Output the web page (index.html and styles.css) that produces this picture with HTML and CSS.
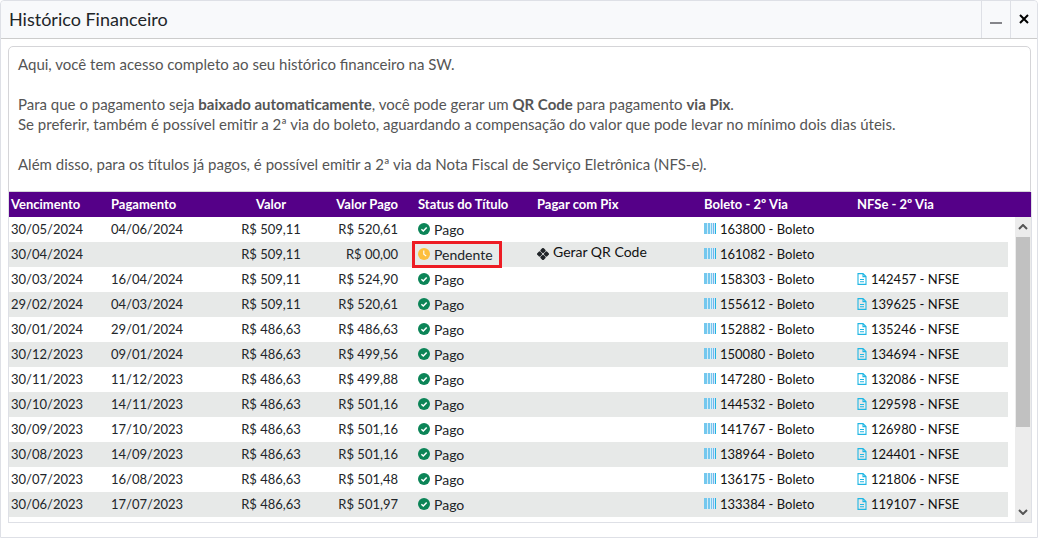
FILE: index.html
```
<!DOCTYPE html>
<html lang="pt-BR">
<head>
  <meta charset="UTF-8" />
  <meta name="viewport" content="width=device-width, initial-scale=1.0" />
  <title>Histórico Financeiro</title>
  <link rel="stylesheet" href="styles.css">
</head>
<body>
  <!-- icons -->
  <svg class="sprite" aria-hidden="true">
    <symbol id="check" viewBox="0 0 12 12">
      <circle cx="6" cy="6" r="6" fill="#0b8457"/>
      <path d="M3.4 6.2l1.9 1.8 3.4-3.6" fill="none" stroke="#fff" stroke-width="1.5"/>
    </symbol>
    <symbol id="clock" viewBox="0 0 12 12">
      <circle cx="6" cy="6" r="6" fill="#fdbf3c"/>
      <path d="M5.8 2.5v3.8l2.4 1.7" fill="none" stroke="#fff" stroke-width="1.1"/>
    </symbol>
    <symbol id="pix" viewBox="0 0 12 12">
      <g fill="#212529">
        <rect x="3.8" y="0.4" width="4.4" height="4.4" rx="1.2" transform="rotate(45 6 2.6)"/>
        <rect x="0.4" y="3.8" width="4.4" height="4.4" rx="1.2" transform="rotate(45 2.6 6)"/>
        <rect x="7.2" y="3.8" width="4.4" height="4.4" rx="1.2" transform="rotate(45 9.4 6)"/>
        <rect x="3.8" y="7.2" width="4.4" height="4.4" rx="1.2" transform="rotate(45 6 9.4)"/>
      </g>
    </symbol>
    <symbol id="barcode" viewBox="0 0 12 12">
      <path d="M0 0h12v11H0z" fill="#d3ecf9"/>
      <path d="M0 0h3v11H0zM4 0h2v11H4zM7 0h1v11H7z" fill="#74c8ee"/>
      <path d="M9 0h1v11H9z" fill="#74b4ee"/>
      <path d="M11 0h1v11h-1z" fill="#22b5e0"/>
    </symbol>
    <symbol id="doc" viewBox="0 0 10 12">
      <path d="M1 .6h5L9 3.6v7.8H1zM6 .6v3h3M3 6.5h4M3 8.8h4" fill="none" stroke="#1fb6e3" stroke-width="1.1"/>
    </symbol>
  </svg>

  <div class="window">
    <header class="titlebar">
      <h1>Histórico Financeiro</h1>
      <button class="win-btn" aria-label="Minimizar"><svg width="12" height="12"><path d="M0 10h12" stroke="#85858a" stroke-width="2"/></svg></button>
      <button class="win-btn" aria-label="Fechar"><svg width="10" height="10"><path d="M1 1l8 8M9 1L1 9" stroke="#000" stroke-width="2"/></svg></button>
    </header>

    <main class="content">
      <div class="intro">
        <p>Aqui, você tem acesso completo ao seu histórico financeiro na SW.</p>
        <p>Para que o pagamento seja <b>baixado automaticamente</b>, você pode gerar um <b>QR Code</b> para pagamento <b>via Pix</b>.<br>
        Se preferir, também é possível emitir a 2ª via do boleto, aguardando a compensação do valor que pode levar no mínimo dois dias úteis.</p>
        <p>Além disso, para os títulos já pagos, é possível emitir a 2ª via da Nota Fiscal de Serviço Eletrônica (NFS-e).</p>
      </div>

      <div class="grid">
        <table>
          <thead>
            <tr><th>Vencimento</th><th>Pagamento</th><th>Valor</th><th>Valor Pago</th><th>Status do Título</th><th>Pagar com Pix</th><th>Boleto - 2º Via</th><th>NFSe - 2º Via</th></tr>
          </thead>
          <tbody>
            <tr><td>30/05/2024</td><td>04/06/2024</td><td>R$ 509,11</td><td>R$ 520,61</td><td><svg class="ico"><use href="#check"/></svg>Pago</td><td></td><td><a href="#"><svg class="ico"><use href="#barcode"/></svg>163800 - Boleto</a></td><td></td></tr>
            <tr><td>30/04/2024</td><td></td><td>R$ 509,11</td><td>R$ 00,00</td><td class="marked"><svg class="ico"><use href="#clock"/></svg>Pendente</td><td><a href="#" class="pix"><svg class="ico"><use href="#pix"/></svg><span>Gerar QR Code</span></a></td><td><a href="#"><svg class="ico"><use href="#barcode"/></svg>161082 - Boleto</a></td><td></td></tr>
            <tr><td>30/03/2024</td><td>16/04/2024</td><td>R$ 509,11</td><td>R$ 524,90</td><td><svg class="ico"><use href="#check"/></svg>Pago</td><td></td><td><a href="#"><svg class="ico"><use href="#barcode"/></svg>158303 - Boleto</a></td><td><a href="#"><svg class="ico doc"><use href="#doc"/></svg>142457 - NFSE</a></td></tr>
            <tr><td>29/02/2024</td><td>04/03/2024</td><td>R$ 509,11</td><td>R$ 520,61</td><td><svg class="ico"><use href="#check"/></svg>Pago</td><td></td><td><a href="#"><svg class="ico"><use href="#barcode"/></svg>155612 - Boleto</a></td><td><a href="#"><svg class="ico doc"><use href="#doc"/></svg>139625 - NFSE</a></td></tr>
            <tr><td>30/01/2024</td><td>29/01/2024</td><td>R$ 486,63</td><td>R$ 486,63</td><td><svg class="ico"><use href="#check"/></svg>Pago</td><td></td><td><a href="#"><svg class="ico"><use href="#barcode"/></svg>152882 - Boleto</a></td><td><a href="#"><svg class="ico doc"><use href="#doc"/></svg>135246 - NFSE</a></td></tr>
            <tr><td>30/12/2023</td><td>09/01/2024</td><td>R$ 486,63</td><td>R$ 499,56</td><td><svg class="ico"><use href="#check"/></svg>Pago</td><td></td><td><a href="#"><svg class="ico"><use href="#barcode"/></svg>150080 - Boleto</a></td><td><a href="#"><svg class="ico doc"><use href="#doc"/></svg>134694 - NFSE</a></td></tr>
            <tr><td>30/11/2023</td><td>11/12/2023</td><td>R$ 486,63</td><td>R$ 499,88</td><td><svg class="ico"><use href="#check"/></svg>Pago</td><td></td><td><a href="#"><svg class="ico"><use href="#barcode"/></svg>147280 - Boleto</a></td><td><a href="#"><svg class="ico doc"><use href="#doc"/></svg>132086 - NFSE</a></td></tr>
            <tr><td>30/10/2023</td><td>14/11/2023</td><td>R$ 486,63</td><td>R$ 501,16</td><td><svg class="ico"><use href="#check"/></svg>Pago</td><td></td><td><a href="#"><svg class="ico"><use href="#barcode"/></svg>144532 - Boleto</a></td><td><a href="#"><svg class="ico doc"><use href="#doc"/></svg>129598 - NFSE</a></td></tr>
            <tr><td>30/09/2023</td><td>17/10/2023</td><td>R$ 486,63</td><td>R$ 501,16</td><td><svg class="ico"><use href="#check"/></svg>Pago</td><td></td><td><a href="#"><svg class="ico"><use href="#barcode"/></svg>141767 - Boleto</a></td><td><a href="#"><svg class="ico doc"><use href="#doc"/></svg>126980 - NFSE</a></td></tr>
            <tr><td>30/08/2023</td><td>14/09/2023</td><td>R$ 486,63</td><td>R$ 501,16</td><td><svg class="ico"><use href="#check"/></svg>Pago</td><td></td><td><a href="#"><svg class="ico"><use href="#barcode"/></svg>138964 - Boleto</a></td><td><a href="#"><svg class="ico doc"><use href="#doc"/></svg>124401 - NFSE</a></td></tr>
            <tr><td>30/07/2023</td><td>16/08/2023</td><td>R$ 486,63</td><td>R$ 501,48</td><td><svg class="ico"><use href="#check"/></svg>Pago</td><td></td><td><a href="#"><svg class="ico"><use href="#barcode"/></svg>136175 - Boleto</a></td><td><a href="#"><svg class="ico doc"><use href="#doc"/></svg>121806 - NFSE</a></td></tr>
            <tr><td>30/06/2023</td><td>17/07/2023</td><td>R$ 486,63</td><td>R$ 501,97</td><td><svg class="ico"><use href="#check"/></svg>Pago</td><td></td><td><a href="#"><svg class="ico"><use href="#barcode"/></svg>133384 - Boleto</a></td><td><a href="#"><svg class="ico doc"><use href="#doc"/></svg>119107 - NFSE</a></td></tr>
          </tbody>
        </table>
        <div class="scrollbar">
          <button aria-label="Subir"><svg width="10" height="6"><path d="M1 5l4-4 4 4" fill="none" stroke="#555" stroke-width="2"/></svg></button>
          <div class="thumb"></div>
          <button aria-label="Descer"><svg width="10" height="6"><path d="M1 1l4 4 4-4" fill="none" stroke="#555" stroke-width="2"/></svg></button>
        </div>
      </div>
    </main>
  </div>
</body>
</html>
```
FILE: styles.css
```
* {
  box-sizing: border-box;
}
body {
  margin: 0;
  background: #fff;
  color: #212529;
  font-family: "ITC Avant Garde Gothic", "Century Gothic", Lato, sans-serif;
  font-size: 13px;
}
.sprite {
  display: none;
}
.window {
  min-height: 100vh;
  border: 1px solid #dee0e6;
  border-radius: 4px 4px 0 0;
}
/* title bar */
.titlebar {
  display: flex;
  height: 38px;
  background: #f8f9fb;
  border-bottom: 1px solid #ccc;
  border-radius: 4px 4px 0 0;
}
.titlebar h1 {
  flex: 1;
  margin: 0;
  padding-left: 8px;
  font-size: 18px;
  font-weight: normal;
  line-height: 36px;
}
.win-btn {
  display: flex;
  align-items: center;
  justify-content: center;
  width: 29px;
  padding: 0 0 2px;
  border: 0;
  border-left: 1px solid #dee0e6;
  background: none;
  cursor: pointer;
}
.win-btn:last-child {
  width: 27px;
}
.content {
  padding: 7px 5px 14px 7px;
}
/* intro text */
.intro {
  margin-right: 1px;
  padding: 7px 9px 17px;
  border: 1px solid #d5d5d8;
  border-radius: 5px 5px 0 0;
  color: #555;
  font-size: 15px;
  line-height: 20px;
}
.intro p {
  margin: 0 0 20px;
}
.intro p:last-child {
  margin: 0;
}
/* table, with the scrollbar beside its body */
.grid {
  display: grid;
  grid-template-columns: 1fr 16px;
  column-gap: 7px;
  border: 1px solid #dee0e6;
  border-top: 0;
}
table {
  display: contents;
}
thead {
  display: block;
  grid-column: 1 / -1;
  background: #550088;
  color: #fff;
}
tbody {
  display: block;
  padding-bottom: 5px;
}
tr {
  display: grid;
  grid-template-columns: 100px 118px 88px 101px 119px 167px 153px 1fr;
  height: 25px;
}
tbody tr:nth-child(even) {
  background: #e7e9e8;
}
th,
td {
  display: flex;
  align-items: center;
  padding: 0 2px 1px;
  white-space: nowrap;
}
th {
  font-weight: bold;
}
th:nth-child(3),
td:nth-child(3) {
  justify-content: center;
}
th:nth-child(4),
td:nth-child(4) {
  justify-content: flex-end;
  padding-right: 18px;
}
td:nth-child(5),
td:nth-child(6) {
  font-size: 14px;
}
td a {
  display: flex;
  align-items: center;
  color: #111;
  text-decoration: none;
}
.ico {
  width: 12px;
  height: 12px;
  margin-right: 4px;
}
.doc {
  width: 10px;
}
.pix span {
  padding-bottom: 6px;
}
.marked {
  position: relative;
}
.marked::after {
  content: "";
  position: absolute;
  top: -1px;
  bottom: -1px;
  left: -4px;
  width: 84px;
  border: 3px solid #ed1c24;
}
/* scrollbar */
.scrollbar {
  display: flex;
  flex-direction: column;
  background: #ececec;
}
.scrollbar button {
  display: flex;
  align-items: center;
  justify-content: center;
  height: 20px;
  padding: 0;
  border: 0;
  background: none;
}
.scrollbar button:last-child {
  margin-top: auto;
}
.thumb {
  height: 190px;
  margin: 0 1px;
  background: #c1c1c1;
}
```
